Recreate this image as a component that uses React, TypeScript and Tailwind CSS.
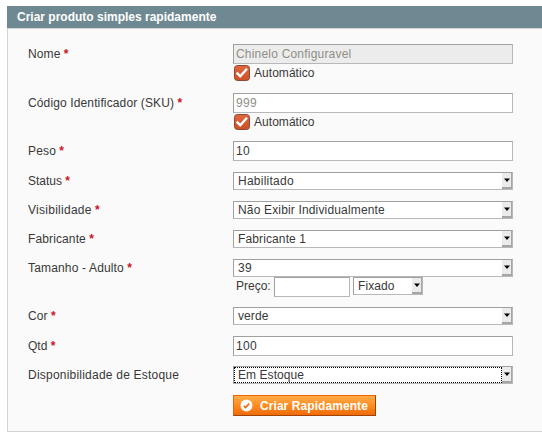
import type { ReactNode } from 'react';

const field = 'box-border border border-t-[#a0a0a0] border-l-[#a0a0a0] border-r-[#b8b8b8] border-b-[#b8b8b8]';

function Row({ label, tracking = '', required = true, height, offset = 'pt-[3px]', children }: { label: string; tracking?: string; required?: boolean; height: string; offset?: string; children: ReactNode }) {
  return (
    <div className={`flex items-start ${height}`}>
      <div className={`w-[205px] shrink-0 whitespace-pre leading-[14px] ${offset}`}>
        <span className={tracking}>{label}</span>
        {required && <span className="font-bold text-[#cc1420]"> *</span>}
      </div>
      <div className="w-[280px] shrink-0">{children}</div>
    </div>
  );
}

function TextField({ value, disabled = false, width = 'w-[280px]', bg = 'bg-white', tracking = '' }: { value: string; disabled?: boolean; width?: string; bg?: string; tracking?: string }) {
  return (
    <input
      className={`${field} ${width} ${bg} ${tracking} block h-5 px-0.5 leading-[14px] outline-none ${disabled ? 'text-[#8f8f87]' : 'text-[#383838]'}`}
      defaultValue={value}
      disabled={disabled}
    />
  );
}

function SelectField({ value, width = 'w-[280px]', focused = false, tracking = '' }: { value: string; width?: string; focused?: boolean; tracking?: string }) {
  return (
    <div className={`${field} ${width} flex h-[18px] bg-white`}>
      <div className={`grow whitespace-nowrap ${focused ? 'border border-dotted border-black pl-[3px] leading-[14px]' : 'pl-1 leading-4'}`}>
        <span className={tracking}>{value}</span>
      </div>
      <div className="flex w-2.5 items-center justify-center border-r border-b-2 border-[#a5a5a5] bg-[#ebebeb]">
        <svg width="6" height="4" viewBox="0 0 6 4" className="shrink-0"><path d="M0 .5h6L3 4z" fill="#000" /></svg>
      </div>
    </div>
  );
}

function AutoCheck() {
  return (
    <label className="flex h-[18px] items-center gap-1 pl-px">
      <svg width="16" height="16" viewBox="0 0 16 16">
        <defs>
          <linearGradient id="check" x1="0" y1="0" x2="0" y2="1">
            <stop offset="0" stopColor="#e0683f" />
            <stop offset="1" stopColor="#cc4f28" />
          </linearGradient>
        </defs>
        <rect x=".5" y=".5" width="15" height="15" rx="3" fill="url(#check)" stroke="#8c4934" />
        <path d="M2.6 7.6 6.2 11.2 13 3.8" fill="none" stroke="#fff" strokeWidth="2.4" />
      </svg>
      <span className="leading-[14px] tracking-[0.04px]">Automático</span>
    </label>
  );
}

export default function App() {
  return (
    <main className="h-[434px] w-[542px] overflow-hidden bg-white pt-1.5 pl-[7px] font-['Liberation_Sans',Arial,sans-serif] text-[12px] text-[#383838]">
      <h1 className="h-[22px] bg-[#6f8992] pl-2.5 leading-[22px] font-bold text-white"><span>Criar produto simples rapidamente</span></h1>
      <section className="h-[404px] border-t border-b border-l border-[#d0d4d6] bg-[#fafafa] pt-[15px] pl-5">
        <Row label="Nome" tracking="tracking-[0.1px]" height="h-[49px]">
          <TextField value="Chinelo Configuravel" tracking="tracking-[0.2px]" disabled bg="bg-[#ececec]" />
          <AutoCheck />
        </Row>
        <Row label="Código Identificador (SKU)" tracking="tracking-[0.13px]" height="h-12">
          <TextField value="999" tracking="tracking-[0.3px]" disabled />
          <AutoCheck />
        </Row>
        <Row label="Peso" tracking="tracking-[0.15px]" height="h-[31px]"><TextField value="10" tracking="tracking-[0.3px]" /></Row>
        <Row label="Status" height="h-[29px]" offset="pt-0.5"><SelectField value="Habilitado" tracking="tracking-[0.25px]" /></Row>
        <Row label="Visibilidade" tracking="tracking-[0.27px]" height="h-[29px]" offset="pt-0.5"><SelectField value="Não Exibir Individualmente" tracking="tracking-[0.16px]" /></Row>
        <Row label="Fabricante" tracking="tracking-[0.12px]" height="h-[29px]" offset="pt-0.5"><SelectField value="Fabricante 1" tracking="tracking-[0.12px]" /></Row>
        <Row label="Tamanho - Adulto" tracking="tracking-[0.16px]" height="h-12" offset="pt-0.5">
          <SelectField value="39" tracking="tracking-[0.3px]" />
          <div className="flex items-start">
            <span className="w-[41px] shrink-0 pt-0.5 pl-[3px] leading-[14px]">Preço:</span>
            <TextField value="" width="w-[76px] mr-[3px]" />
            <SelectField value="Fixado" width="w-[70px]" tracking="tracking-[0.1px]" />
          </div>
        </Row>
        <Row label="Cor" tracking="tracking-[0.1px]" height="h-[29px]" offset="pt-0.5"><SelectField value="verde" tracking="tracking-[0.1px]" /></Row>
        <Row label="Qtd" height="h-[30px]"><TextField value="100" tracking="tracking-[0.3px]" /></Row>
        <Row label="Disponibilidade de Estoque" tracking="tracking-[0.22px]" required={false} height="h-[29px]" offset="pt-0.5"><SelectField value="Em Estoque" tracking="tracking-[0.06px]" focused /></Row>
        <button className="ml-[205px] flex h-[21px] w-[143px] items-center border border-t-[#ed6502] border-r-[#a04300] border-b-[#a04300] border-l-[#ed6502] bg-linear-to-b from-[#ffac47] via-[#fc8c20] to-[#ef6b07] pl-1.5 font-bold text-white">
          <svg width="13" height="13" viewBox="0 0 13 13" className="mr-[7px]">
            <circle cx="6.5" cy="6.5" r="6" fill="#fff" />
            <path d="M3.8 6.8 5.6 8.6 9.2 4.6" fill="none" stroke="#ed6b10" strokeWidth="1.7" />
          </svg>
          <span className="whitespace-nowrap leading-[14px] tracking-[0.07px]">Criar Rapidamente</span>
        </button>
      </section>
    </main>
  );
}
